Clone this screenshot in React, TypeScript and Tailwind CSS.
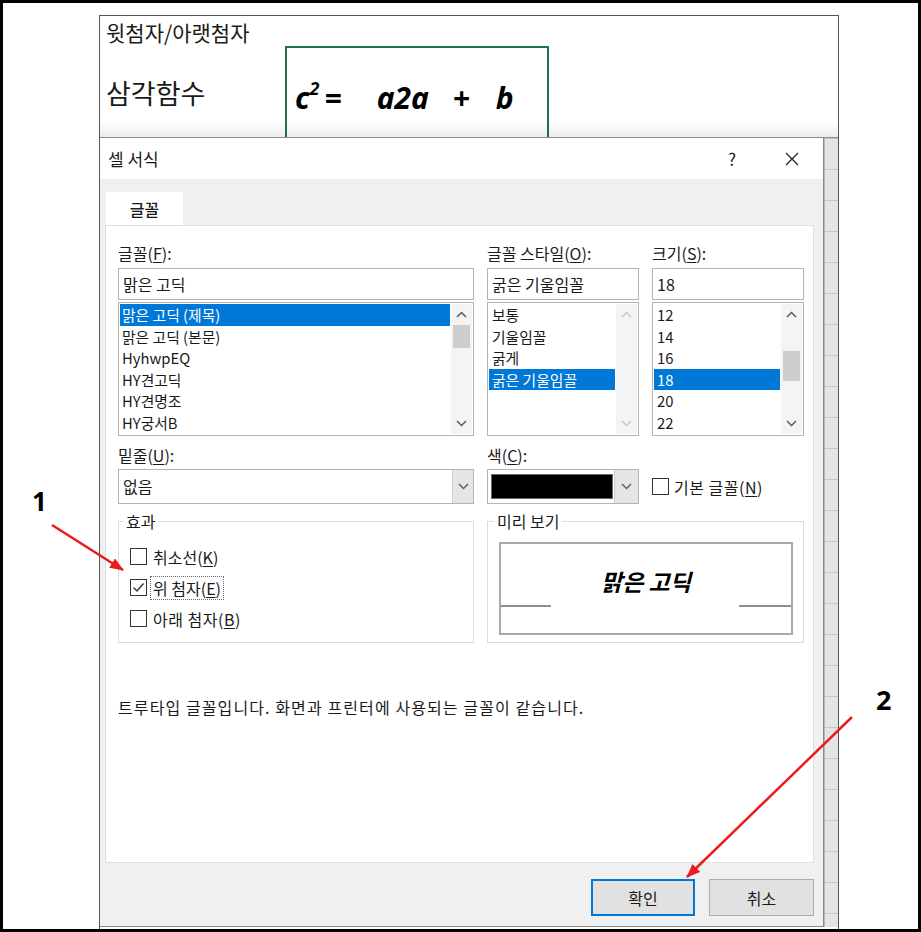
import React from 'react';

const fontItems = ['맑은 고딕 (제목)', '맑은 고딕 (본문)', 'HyhwpEQ', 'HY견고딕', 'HY견명조', 'HY궁서B'];
const styleItems = ['보통', '기울임꼴', '굵게', '굵은 기울임꼴'];
const sizeItems = ['12', '14', '16', '18', '20', '22'];

function Chevron({ dir, color }: { dir: 'up' | 'down'; color: string }) {
  return (
    <svg width="11" height="7" viewBox="0 0 11 7" className="block">
      <path
        d={dir === 'up' ? 'M1 6L5.5 1.5L10 6' : 'M1 1L5.5 5.5L10 1'}
        fill="none"
        stroke={color}
        strokeWidth="1.5"
      />
    </svg>
  );
}

function ScrollBar({ thumbClass, disabled }: { thumbClass?: string; disabled?: boolean }) {
  const color = disabled ? '#c8c8c8' : '#5a5a5a';
  return (
    <div className="flex w-[21px] shrink-0 flex-col bg-[#f4f4f4]">
      <div className="flex h-[21px] items-center justify-center">
        <Chevron dir="up" color={color} />
      </div>
      <div className="flex-1">
        {thumbClass && <div className={`mx-[2px] bg-[#cdcdcd] ${thumbClass}`} />}
      </div>
      <div className="flex h-[21px] items-center justify-center">
        <Chevron dir="down" color={color} />
      </div>
    </div>
  );
}

function ListBox({
  items,
  selected,
  pad,
  scroll,
}: {
  items: string[];
  selected: number;
  pad: string;
  scroll: React.ReactNode;
}) {
  return (
    <div className="mt-[2px] flex h-[134px] gap-[1px] border border-[#b4b4b4] bg-white p-[1px]">
      <div className="flex flex-1 flex-col">
        {items.map((item, i) => (
          <div
            key={item}
            className={`h-[21.5px] whitespace-nowrap text-[14.8px] leading-[21.5px] ${pad} ${
              i === selected ? 'bg-[#0078d7] text-white' : ''
            }`}
          >
            {item}
          </div>
        ))}
      </div>
      {scroll}
    </div>
  );
}

function TextBox({ value }: { value: string }) {
  return (
    <div className="h-[32px] border border-[#b4b4b4] bg-white pl-[4px] leading-[30px]">{value}</div>
  );
}

function Check({ checked }: { checked?: boolean }) {
  return (
    <span className="flex h-[17px] w-[17px] shrink-0 items-center justify-center border border-[#333333] bg-white">
      {checked && (
        <svg width="13" height="11" viewBox="0 0 13 11">
          <path d="M1.5 5.5L5 9L11.5 1.5" fill="none" stroke="#333333" strokeWidth="1.4" />
        </svg>
      )}
    </span>
  );
}

function Label({ text, hot }: { text: string; hot: string }) {
  return (
    <div className="h-[25px] whitespace-nowrap leading-[20px]">
      {text}(<span className="underline underline-offset-2">{hot}</span>):
    </div>
  );
}

export default function App() {
  return (
    <div className="relative h-[932px] w-[921px] overflow-hidden border-[3px] border-black bg-white font-['Noto_Sans_CJK_KR','Noto_Sans',sans-serif] text-[16px] text-[#1a1a1a]">
      <div className="ml-[96px] mt-[12px] flex h-[930px] w-[740px] flex-col border border-[#555555]">
        {/* sheet behind the dialog */}
        <div className="relative h-[122px] shrink-0 border-b border-[#8c8c8c]">
          <div className="h-[30px] pl-[6px] text-[21px] leading-[32px]">윗첨자/아랫첨자</div>
          <div className="flex h-[91px]">
            <div className="w-[185px] pl-[6px] pt-[29px] text-[27px] leading-[36px]">삼각함수</div>
            <div className="h-[91px] w-[264px] border-2 border-b-0 border-[#217346] pl-[8px] pt-[32px] font-['Noto_Sans',sans-serif] text-[30px] font-bold italic leading-[36px] text-black">
              <span>c</span>
              <sup className="-top-[14px] text-[18px]">2</sup>
              <span className="ml-[5px]">=</span>
              <span className="ml-[35px]">a2a</span>
              <span className="ml-[24px]">+</span>
              <span className="ml-[26px]">b</span>
            </div>
          </div>
          <div className="absolute bottom-0 left-0 right-0 h-[16px] bg-linear-to-b from-transparent to-black/[0.07]" />
        </div>

        <div className="flex items-start">
          {/* dialog */}
          <div className="flex h-[789px] w-[724px] shrink-0 flex-col border-b border-r border-[#8a8a8a]">
            <div className="flex h-[41px] shrink-0 items-center bg-white pl-[8px]">
              <span className="text-[17px]">셀 서식</span>
              <span className="ml-auto mr-[22px] w-[30px] text-center text-[17px]">?</span>
              <span className="mr-[8px] flex w-[46px] justify-center">
                <svg width="14" height="14" viewBox="0 0 14 14">
                  <path d="M1 1L13 13M13 1L1 13" stroke="#222222" strokeWidth="1.3" />
                </svg>
              </span>
            </div>

            <div className="flex flex-1 flex-col bg-[#f0f0f0] pl-[5px] pr-[9px] pt-[13px]">
              <div className="ml-[1px] flex h-[33px] w-[77px] items-center justify-center bg-white font-medium">
                글꼴
              </div>

              <div className="h-[638px] border border-[#dedede] bg-white pl-[12px] pt-[17px]">
                <div className="flex gap-[13px]">
                  <div className="w-[356px]">
                    <Label text="글꼴" hot="F" />
                    <TextBox value="맑은 고딕" />
                    <ListBox
                      items={fontItems}
                      selected={0}
                      pad="pl-[2px]"
                      scroll={<ScrollBar thumbClass="h-[23px]" />}
                    />
                  </div>
                  <div className="w-[152px]">
                    <Label text="글꼴 스타일" hot="O" />
                    <TextBox value="굵은 기울임꼴" />
                    <ListBox items={styleItems} selected={3} pad="pl-[3px]" scroll={<ScrollBar disabled />} />
                  </div>
                  <div className="w-[152px]">
                    <Label text="크기" hot="S" />
                    <TextBox value="18" />
                    <ListBox
                      items={sizeItems}
                      selected={3}
                      pad="pl-[3px]"
                      scroll={<ScrollBar thumbClass="mt-[26px] h-[30px]" />}
                    />
                  </div>
                </div>

                <div className="mt-[9px] flex gap-[13px]">
                  <div className="w-[356px]">
                    <div className="h-[24px] leading-[20px]">
                      밑줄(<span className="underline underline-offset-2">U</span>):
                    </div>
                    <div className="flex h-[35px] border border-[#b4b4b4] bg-white">
                      <span className="flex-1 pl-[4px] leading-[33px]">없음</span>
                      <span className="flex w-[21px] items-center justify-center border-l border-[#cfcfcf] bg-[#e5e5e5]">
                        <Chevron dir="down" color="#606060" />
                      </span>
                    </div>
                  </div>
                  <div className="w-[152px]">
                    <div className="h-[24px] leading-[20px]">
                      색(<span className="underline underline-offset-2">C</span>):
                    </div>
                    <div className="flex h-[35px] border border-[#b4b4b4] bg-white">
                      <span className="flex flex-1 items-center pl-[3px]">
                        <span className="h-[25px] w-[122px] border border-[#6a6a6a] bg-black" />
                      </span>
                      <span className="flex w-[24px] items-center justify-center border-l border-[#cfcfcf] bg-[#e5e5e5]">
                        <Chevron dir="down" color="#606060" />
                      </span>
                    </div>
                  </div>
                  <div className="w-[152px]">
                    <div className="h-[24px]" />
                    <div className="flex h-[35px] items-center gap-[5px]">
                      <Check />
                      <span className="whitespace-nowrap tracking-[0.5px]">
                        기본 글꼴(<span className="underline underline-offset-2">N</span>)
                      </span>
                    </div>
                  </div>
                </div>

                <div className="mt-[7px] flex gap-[13px]">
                  <fieldset className="h-[132px] w-[356px] border border-[#dcdcdc]">
                    <legend className="ml-[4px] px-[3px] leading-[20px]">효과</legend>
                    <div className="pl-[11px] pt-[10px]">
                      <div className="flex h-[31px] items-center gap-[6px]">
                        <Check />
                        <span>
                          취소선(<span className="underline underline-offset-2">K</span>)
                        </span>
                      </div>
                      <div className="flex h-[31px] items-center gap-[3px]">
                        <Check checked />
                        <span className="border border-dotted border-[#6a6a6a] px-[2px] leading-[22px]">
                          위 첨자(<span className="underline underline-offset-2">E</span>)
                        </span>
                      </div>
                      <div className="flex h-[31px] items-center gap-[6px]">
                        <Check />
                        <span className="tracking-[0.5px]">
                          아래 첨자(<span className="underline underline-offset-2">B</span>)
                        </span>
                      </div>
                    </div>
                  </fieldset>
                  <fieldset className="h-[132px] w-[317px] border border-[#dcdcdc]">
                    <legend className="ml-[6px] px-[3px] leading-[20px]">미리 보기</legend>
                    <div className="ml-[11px] mt-[11px] flex h-[93px] w-[294px] flex-col border-2 border-[#aaaaaa]">
                      <div className="flex h-[61px] items-center justify-center pt-[13px] text-[23px] font-bold italic text-black">
                        맑은 고딕
                      </div>
                      <div className="flex justify-between">
                        <span className="h-[2px] w-[50px] bg-[#8f8f8f]" />
                        <span className="h-[2px] w-[52px] bg-[#8f8f8f]" />
                      </div>
                    </div>
                  </fieldset>
                </div>

                <div className="mt-[53px] whitespace-nowrap leading-[22px] tracking-[1.1px]">
                  트루타입 글꼴입니다. 화면과 프린터에 사용되는 글꼴이 같습니다.
                </div>
              </div>

              <div className="mt-[16px] flex justify-end gap-[14px]">
                <button className="h-[37px] w-[104px] border-2 border-[#0078d7] bg-[#e1e1e1]">확인</button>
                <button className="h-[37px] w-[105px] border border-[#adadad] bg-[#e1e1e1]">취소</button>
              </div>
            </div>
          </div>

          {/* strip of the sheet still visible at the right */}
          <div className="flex h-[789px] flex-1 flex-col border-l border-[#b8b8b8] bg-[#e4e4e4]">
            <div className="h-[4px] border-b border-[#c4c4c4]" />
            {Array.from({ length: 26 }).map((_, i) => (
              <div key={i} className="h-[31px] shrink-0 border-b border-[#c4c4c4]" />
            ))}
          </div>
        </div>
      </div>

      {/* annotations */}
      <span className="absolute left-[29px] top-[485px] font-['Noto_Sans',sans-serif] text-[26px] font-bold leading-none text-black">
        1
      </span>
      <span className="absolute left-[873px] top-[683px] font-['Noto_Sans',sans-serif] text-[27px] font-bold leading-none text-black">
        2
      </span>
      <svg
        className="pointer-events-none absolute left-[-3px] top-[-3px]"
        width="921"
        height="932"
        viewBox="0 0 921 932"
      >
        <defs>
          <marker
            id="head"
            markerUnits="userSpaceOnUse"
            markerWidth="14"
            markerHeight="11"
            refX="13"
            refY="5.5"
            orient="auto"
          >
            <path d="M0 0L14 5.5L0 11Z" fill="#ea1c1c" />
          </marker>
        </defs>
        <line x1="52" y1="525" x2="123" y2="570" stroke="#ea1c1c" strokeWidth="2.5" markerEnd="url(#head)" />
        <line x1="852" y1="717" x2="687" y2="877" stroke="#ea1c1c" strokeWidth="2.5" markerEnd="url(#head)" />
      </svg>
    </div>
  );
}
